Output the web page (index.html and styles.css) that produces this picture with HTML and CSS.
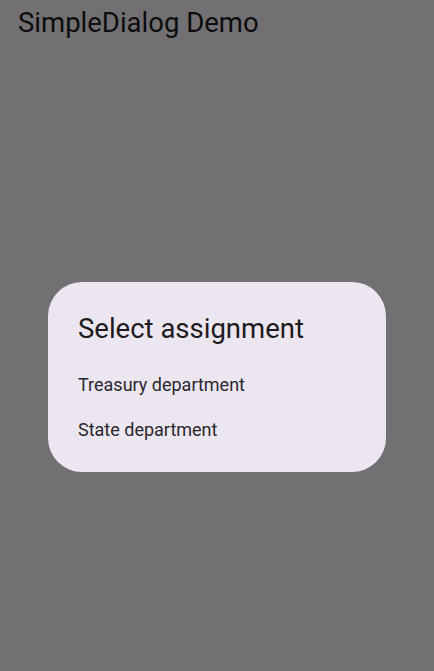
FILE: index.html
```html
<!DOCTYPE html>
<html>
<head>
<meta charset="utf-8">
<link rel="stylesheet" href="styles.css">
</head>
<body>
<div class="app">
  <header class="appbar"><h1 class="appbar-title">SimpleDialog Demo</h1></header>
</div>
<div class="barrier">
  <div class="dialog" role="dialog">
    <h2 class="dialog-title">Select assignment</h2>
    <div class="options">
      <div class="option">Treasury department</div>
      <div class="option">State department</div>
    </div>
  </div>
</div>
</body>
</html>
```
FILE: styles.css
```css
html, body {
  margin: 0;
  padding: 0;
  width: 434px;
  height: 671px;
  overflow: hidden;
  font-family: Roboto, "Noto Sans", sans-serif;
  background: #f8f4fa;
}
.app {
  height: 671px;
}
.appbar {
  height: 44px;
  display: flex;
  align-items: center;
  padding-left: 18px;
}
.appbar-title {
  margin: 0;
  font-weight: 400;
  font-size: 27.5px;
  color: #1d1b20;
}
.barrier {
  position: fixed;
  inset: 0;
  background: rgba(0, 0, 0, 0.54);
  display: flex;
  align-items: center;
  justify-content: center;
  padding: 0 48px;
}
.dialog {
  flex: 1;
  background: #ece6f0;
  border-radius: 34px;
  padding: 29px 0 19px;
  box-sizing: border-box;
  height: 190px;
  margin-top: 82px;
}
.dialog-title {
  margin: 0 30px 0;
  font-weight: 400;
  font-size: 27.5px;
  line-height: 36px;
  color: #1d1b20;
}
.options {
  padding-top: 15px;
}
.option {
  padding: 10px 30px;
  font-size: 18px;
  line-height: 25px;
  color: #2a272e;
}
```
